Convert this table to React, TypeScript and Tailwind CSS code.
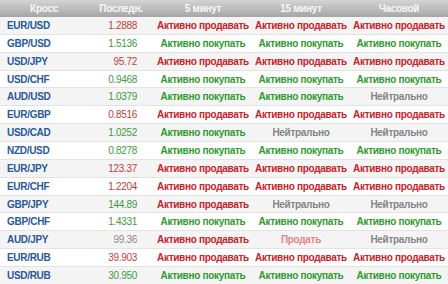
import React from 'react';

type Signal = 'sell' | 'buy' | 'neutral' | 'weakSell';
type Row = { pair: string; last: string; dir: 'up' | 'down' | 'flat'; s: [Signal, Signal, Signal] };

const rows: Row[] = [
  { pair: 'EUR/USD', last: '1.2888', dir: 'down', s: ['sell', 'sell', 'sell'] },
  { pair: 'GBP/USD', last: '1.5136', dir: 'up', s: ['buy', 'buy', 'buy'] },
  { pair: 'USD/JPY', last: '95.72', dir: 'down', s: ['sell', 'sell', 'sell'] },
  { pair: 'USD/CHF', last: '0.9468', dir: 'up', s: ['buy', 'buy', 'buy'] },
  { pair: 'AUD/USD', last: '1.0379', dir: 'up', s: ['buy', 'buy', 'neutral'] },
  { pair: 'EUR/GBP', last: '0.8516', dir: 'down', s: ['sell', 'sell', 'sell'] },
  { pair: 'USD/CAD', last: '1.0252', dir: 'up', s: ['buy', 'neutral', 'neutral'] },
  { pair: 'NZD/USD', last: '0.8278', dir: 'up', s: ['buy', 'buy', 'buy'] },
  { pair: 'EUR/JPY', last: '123.37', dir: 'down', s: ['sell', 'sell', 'sell'] },
  { pair: 'EUR/CHF', last: '1.2204', dir: 'down', s: ['sell', 'sell', 'sell'] },
  { pair: 'GBP/JPY', last: '144.89', dir: 'up', s: ['sell', 'neutral', 'neutral'] },
  { pair: 'GBP/CHF', last: '1.4331', dir: 'up', s: ['buy', 'buy', 'buy'] },
  { pair: 'AUD/JPY', last: '99.36', dir: 'flat', s: ['sell', 'weakSell', 'neutral'] },
  { pair: 'EUR/RUB', last: '39.903', dir: 'down', s: ['sell', 'sell', 'sell'] },
  { pair: 'USD/RUB', last: '30.950', dir: 'up', s: ['buy', 'buy', 'buy'] },
];

const signalText: Record<Signal, string> = {
  sell: 'Активно продавать',
  buy: 'Активно покупать',
  neutral: 'Нейтрально',
  weakSell: 'Продать',
};

function SignalCell({ s }: { s: Signal }) {
  const cls =
    s === 'sell'
      ? 'text-[#c8232b]'
      : s === 'buy'
        ? 'text-[#2e9b2e]'
        : s === 'weakSell'
          ? 'text-[#e38686]'
          : 'text-[#858585]';
  return <div className={`text-center font-bold ${cls}`}>{signalText[s]}</div>;
}

export default function App() {
  return (
    <div
      className="w-[448px] h-[284px] overflow-hidden bg-white text-[10px] tracking-[-0.3px]"
      style={{ fontFamily: '"Liberation Sans", Arial, sans-serif' }}
    >
      <div className="grid grid-cols-[88px_66px_98px_98px_98px] items-center h-[17px] bg-gradient-to-b from-[#d4d4d4] to-[#a6a6a6] text-[#f7f7f7] font-bold">
        <div className="text-center">Кросс</div>
        <div className="text-center">Последн.</div>
        <div className="text-center">5 минут</div>
        <div className="text-center">15 минут</div>
        <div className="text-center">Часовой</div>
      </div>
      {rows.map((r, i) => (
        <div
          key={r.pair}
          className={`grid grid-cols-[88px_66px_98px_98px_98px] items-center h-[17.86px] border-b border-[#e3e3e3] ${
            i % 2 === 0 ? 'bg-[#f4f4f4]' : 'bg-white'
          }`}
        >
          <div className="pl-[7px] font-bold text-[#28589a]">{r.pair}</div>
          <div
            className={`text-right pr-[17px] ${
              r.dir === 'down' ? 'text-[#c83c3c]' : r.dir === 'up' ? 'text-[#3d9b3d]' : 'text-[#8a8a8a]'
            }`}
          >
            {r.last}
          </div>
          {r.s.map((s, j) => (
            <SignalCell key={j} s={s} />
          ))}
        </div>
      ))}
    </div>
  );
}
